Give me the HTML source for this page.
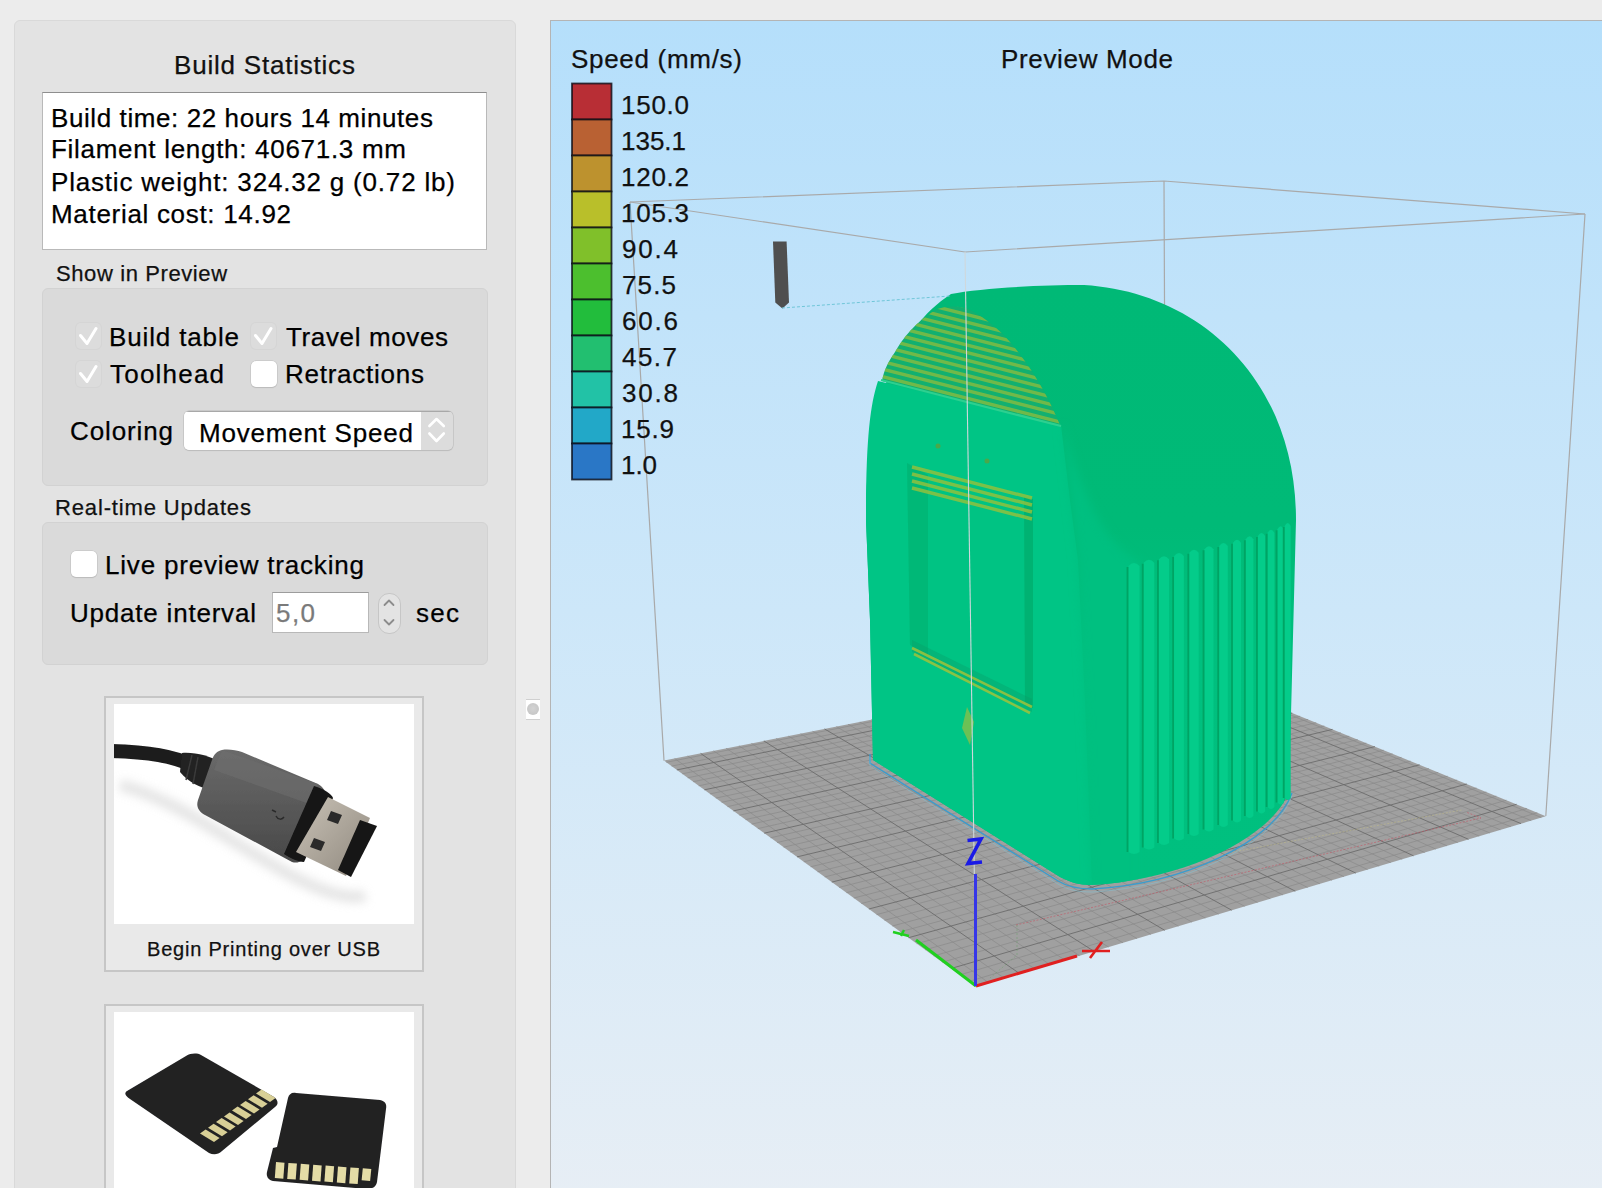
<!DOCTYPE html>
<html><head><meta charset="utf-8"><style>
html,body{margin:0;padding:0}
body{width:1602px;height:1188px;position:relative;overflow:hidden;background:#ececec;font-family:"Liberation Sans", sans-serif}
.abs{position:absolute}
.cbd{width:25px;height:26px;border-radius:5px;background:#dcdcdc;box-shadow:0 0 0 1px #d5d5d5}
.cbu{width:26px;height:26px;border-radius:5px;background:#fff;box-shadow:0 0 0 0.5px #bdbdbd, 0 1px 1px rgba(0,0,0,0.15)}
.card{background:#e9e9e9;border:2px solid #c6c6c6}
.t{position:absolute;white-space:pre;font-family:"Liberation Sans", sans-serif;-webkit-text-stroke:0.25px currentColor}
</style></head><body>
<div class="abs" style="left:14px;top:20px;width:500px;height:1200px;background:#e3e3e3;border:1px solid #d9d9d9;border-radius:6px"></div>
<div class="abs" style="left:42px;top:92px;width:443px;height:156px;background:#fff;border:1px solid #b9b9b9;border-top-color:#8e8e8e"></div>
<div class="abs" style="left:42px;top:288px;width:444px;height:196px;background:#dadada;border:1px solid #d2d2d2;border-radius:6px"></div>
<div class="abs" style="left:42px;top:522px;width:444px;height:141px;background:#dadada;border:1px solid #d2d2d2;border-radius:6px"></div>

<!-- disabled checked checkboxes -->
<div class="abs cbd" style="left:75.5px;top:322.5px"></div>
<div class="abs cbd" style="left:250.5px;top:322.5px"></div>
<div class="abs cbd" style="left:75.5px;top:360.5px"></div>
<svg class="abs" style="left:0;top:0" width="520" height="700">
 <path d="M80.5 335.5 L87 343.5 L96 328.5 M255.5 335.5 L262 343.5 L271 328.5 M80.5 373.5 L87 381.5 L96 366.5" stroke="#fff" stroke-width="3" fill="none" stroke-linecap="round" stroke-linejoin="round"/>
</svg>
<div class="abs cbu" style="left:250.5px;top:360.5px"></div>
<div class="abs cbu" style="left:70.5px;top:550.5px"></div>
<!-- popup -->
<div class="abs" style="left:183.5px;top:410.5px;width:269px;height:39px;border-radius:5px;background:#dcdcdc;box-shadow:0 0 0 0.5px #b8b8b8, 0 1px 1px rgba(0,0,0,0.12);overflow:hidden">
  <div class="abs" style="left:0;top:0;width:237px;height:39px;background:#fff"></div>
  <div class="abs" style="left:0;top:0;width:269px;height:1px;background:#a8a8a8"></div>
</div>

<!-- text field -->
<div class="abs" style="left:271.5px;top:591.5px;width:95px;height:39px;background:#fff;border:1px solid #b8b8b8;border-top-color:#9c9c9c"></div>
<!-- stepper -->
<div class="abs" style="left:378px;top:593px;width:21px;height:39px;border-radius:11px;background:#e3e3e3;border:1px solid #c6c6c6"></div>
<svg class="abs" style="left:0;top:0" width="520" height="700">
 <path d="M429.4 426 L436.5 419 L443.8 426 M429.4 433.5 L436.5 441 L443.8 433.5" stroke="#fff" stroke-width="2.6" fill="none" stroke-linecap="round" stroke-linejoin="round"/>
 <path d="M384.5 605 L389 600.5 L393.5 605 M384.5 620 L389 624.5 L393.5 620" stroke="#8c8c8c" stroke-width="1.8" fill="none" stroke-linecap="round" stroke-linejoin="round"/>
</svg>
<!-- cards -->
<div class="abs card" style="left:104px;top:696px;width:316px;height:272px"></div>
<div class="abs card" style="left:104px;top:1004px;width:316px;height:260px"></div>
<div class="abs" style="left:114px;top:704px;width:300px;height:220px;background:#fff"></div>
<div class="abs" style="left:114px;top:1012px;width:300px;height:220px;background:#fff"></div>
<!-- splitter knob -->
<div class="abs" style="left:526px;top:698.5px;width:14px;height:19px;background:#fff;border-top:1px solid #d0d0d0;border-bottom:1px solid #d0d0d0"></div>
<div class="abs" style="left:527px;top:702.5px;width:12px;height:12px;border-radius:50%;background:radial-gradient(circle at 50% 45%, #d4d4d4, #c2c2c2)"></div>


<svg class="abs" style="left:0;top:0" width="520" height="1188">
<defs>
 <filter id="blur4" x="-50%" y="-50%" width="200%" height="200%"><feGaussianBlur stdDeviation="5"/></filter>
 <filter id="blur1" x="-20%" y="-20%" width="140%" height="140%"><feGaussianBlur stdDeviation="0.7"/></filter>
 <linearGradient id="metal" x1="0" y1="0" x2="1" y2="1">
  <stop offset="0" stop-color="#c9c2b6"/><stop offset="1" stop-color="#8f887e"/>
 </linearGradient>
 <linearGradient id="body" x1="0" y1="0" x2="0" y2="1">
  <stop offset="0" stop-color="#6a6a6a"/><stop offset="1" stop-color="#484848"/>
 </linearGradient>
 <clipPath id="usbclip"><rect x="114" y="704" width="300" height="220"/></clipPath>
 <clipPath id="sdclip"><rect x="114" y="1012" width="300" height="176"/></clipPath>
</defs>
<g clip-path="url(#usbclip)">
 <path d="M120 785 C180 800 240 850 300 880 C330 895 355 900 365 895" stroke="#d0d0d0" stroke-width="12" fill="none" filter="url(#blur4)" opacity="0.55"/>
 <g filter="url(#blur1)">
 <path d="M110 751 C150 752 172 756 195 766" stroke="#1c1c1c" stroke-width="14" fill="none"/>
 <path d="M182 753 C195 752 210 756 220 762 L212 790 C200 788 188 782 180 772 Z" fill="#222"/>
 <path d="M192 755 L186 780 M198 757 L193 784" stroke="#3a3a3a" stroke-width="1.5"/>
 <path d="M222 750 C228 749 236 750 242 752 L318 784 C324 787 326 792 324 798 L306 855 C304 861 298 864 292 862 L205 815 C198 811 196 806 198 800 L212 760 C214 754 217 751 222 750 Z" fill="url(#body)"/>
 <path d="M222 750 L318 784 L312 805 L214 770 Z" fill="#707070" opacity="0.5"/>
 <path d="M314 786 C322 788 332 794 333 798 L304 862 C298 862 290 858 284 854 Z" fill="#141414"/>
 <path d="M328 797 L370 818 L346 876 L296 852 Z" fill="url(#metal)"/>
 <path d="M331 811 L342 815 L338 824 L327 820 Z M314 838 L325 842 L321 851 L310 847 Z" fill="#2a2a2a"/>
 <path d="M360 820 L377 826 L351 877 L338 870 Z" fill="#151515"/>
 <path d="M272 810 l4 2 M276 816 c2 4 6 4 8 1" stroke="#2a2a2a" stroke-width="1.5" fill="none"/>
 </g>
</g>
<g clip-path="url(#sdclip)" filter="url(#blur1)">
 <path d="M127 1091 L186 1056 C191 1053 197 1053 201 1055 L274 1097 C278 1100 279 1104 275 1107 L222 1151 C218 1155 213 1155 209 1153 L130 1099 C125 1096 124 1093 127 1091 Z" fill="#222224"/>
 <path d="M214.0 1142.0 l-14 -8.5 l5.6 -4 l14 8.5 Z" fill="#d8cf96"/><path d="M222.0 1136.3 l-14 -8.5 l5.6 -4 l14 8.5 Z" fill="#d8cf96"/><path d="M230.0 1130.6 l-14 -8.5 l5.6 -4 l14 8.5 Z" fill="#d8cf96"/><path d="M238.0 1124.9 l-14 -8.5 l5.6 -4 l14 8.5 Z" fill="#d8cf96"/><path d="M246.0 1119.1 l-14 -8.5 l5.6 -4 l14 8.5 Z" fill="#d8cf96"/><path d="M254.0 1113.4 l-14 -8.5 l5.6 -4 l14 8.5 Z" fill="#d8cf96"/><path d="M262.0 1107.7 l-14 -8.5 l5.6 -4 l14 8.5 Z" fill="#d8cf96"/><path d="M270.0 1102.0 l-14 -8.5 l5.6 -4 l14 8.5 Z" fill="#d8cf96"/>
 <path d="M296 1093 L380 1100 C385 1101 387 1104 386 1109 L377 1182 C376 1187 372 1189 367 1189 L273 1181 C268 1180 266 1176 267 1172 L273 1148 L277 1147 L288 1098 C289 1094 292 1092 296 1093 Z" fill="#222224"/>
 <path d="M276.0 1162.0 l8.5 0.7 l-1.2 16 l-8.5 -0.7 Z" fill="#e4dca6"/><path d="M288.4 1162.9 l8.5 0.7 l-1.2 16 l-8.5 -0.7 Z" fill="#e4dca6"/><path d="M300.8 1163.8 l8.5 0.7 l-1.2 16 l-8.5 -0.7 Z" fill="#e4dca6"/><path d="M313.2 1164.7 l8.5 0.7 l-1.2 16 l-8.5 -0.7 Z" fill="#e4dca6"/><path d="M325.6 1165.6 l8.5 0.7 l-1.2 16 l-8.5 -0.7 Z" fill="#e4dca6"/><path d="M338.0 1166.5 l8.5 0.7 l-1.2 16 l-8.5 -0.7 Z" fill="#e4dca6"/><path d="M350.4 1167.4 l8.5 0.7 l-1.2 16 l-8.5 -0.7 Z" fill="#e4dca6"/><path d="M362.8 1168.3 l8.5 0.7 l-1.2 12 l-8.5 -0.7 Z" fill="#e4dca6"/>
</g>
</svg>


<svg class="abs" style="left:0;top:0" width="1602" height="1188" viewBox="0 0 1602 1188">
<defs>
 <linearGradient id="bg" x1="0" y1="0" x2="0" y2="1">
  <stop offset="0" stop-color="#b5dffb"/>
  <stop offset="0.5" stop-color="#cde7f9"/>
  <stop offset="1" stop-color="#e7eef5"/>
 </linearGradient>
 <clipPath id="vp"><rect x="551" y="21" width="1051" height="1167"/></clipPath>
</defs>
<rect x="550.5" y="20.5" width="1060" height="1180" fill="url(#bg)" stroke="#b4b4b4" stroke-width="1"/>
<g clip-path="url(#vp)">
 <!-- bbox back lines -->
 <path d="M630 202 L1164 181 L1585 214 M1164 181 L1166 661" stroke="#a9a9a9" stroke-width="1.2" fill="none"/>
 <path d="M976.2 986.7L1545.8 816.2L1166 661.6L664 760.6Z" fill="#a0a0a0"/>
 <path d="M988.9 982.9L674.6 758.5 M968.9 981.4L1537.3 812.7 M1004.4 978.3L687.7 755.9 M959.9 974.9L1526.9 808.5 M1035.0 969.1L713.5 750.8 M942.3 962.2L1506.4 800.2 M1050.0 964.6L726.2 748.3 M933.7 955.9L1496.3 796.1 M1064.9 960.1L738.9 745.8 M925.2 949.8L1486.4 792.0 M1079.6 955.7L751.4 743.4 M916.8 943.7L1476.5 788.0 M1108.6 947.1L776.2 738.5 M900.4 931.8L1457.1 780.1 M1122.9 942.8L788.4 736.1 M892.4 926.0L1447.6 776.2 M1137.0 938.6L800.6 733.7 M884.5 920.3L1438.2 772.4 M1150.9 934.4L812.6 731.3 M876.6 914.6L1428.9 768.6 M1178.4 926.2L836.4 726.6 M861.3 903.5L1410.5 761.1 M1191.9 922.1L848.1 724.3 M853.8 898.0L1401.5 757.4 M1205.3 918.1L859.8 722.0 M846.4 892.7L1392.5 753.8 M1218.6 914.2L871.4 719.7 M839.0 887.4L1383.7 750.2 M1244.6 906.3L894.2 715.2 M824.7 876.9L1366.3 743.1 M1257.5 902.5L905.5 713.0 M817.6 871.8L1357.7 739.6 M1270.2 898.7L916.7 710.8 M810.6 866.8L1349.2 736.2 M1282.8 894.9L927.8 708.6 M803.8 861.8L1340.8 732.8 M1307.6 887.5L949.8 704.2 M790.3 852.0L1324.3 726.0 M1319.8 883.8L960.7 702.1 M783.6 847.2L1316.2 722.7 M1332.0 880.2L971.5 700.0 M777.1 842.5L1308.1 719.4 M1343.9 876.6L982.2 697.8 M770.6 837.8L1300.1 716.2 M1367.6 869.6L1003.4 693.7 M757.9 828.6L1284.4 709.8 M1379.2 866.1L1013.8 691.6 M751.7 824.1L1276.6 706.6 M1390.7 862.6L1024.2 689.6 M745.5 819.6L1269.0 703.5 M1402.2 859.2L1034.5 687.5 M739.4 815.2L1261.4 700.4 M1424.7 852.5L1054.9 683.5 M727.5 806.6L1246.4 694.3 M1435.8 849.1L1065.0 681.5 M721.6 802.3L1239.0 691.3 M1446.8 845.8L1075.0 679.5 M715.8 798.1L1231.7 688.4 M1457.7 842.6L1084.9 677.6 M710.0 793.9L1224.5 685.4 M1479.2 836.1L1104.6 673.7 M698.7 785.8L1210.2 679.6 M1489.8 833.0L1114.3 671.8 M693.2 781.7L1203.2 676.7 M1500.3 829.8L1123.9 669.9 M687.7 777.8L1196.2 673.9 M1510.7 826.7L1133.5 668.0 M682.3 773.8L1189.3 671.1 M1531.2 820.6L1152.5 664.3 M671.6 766.1L1175.7 665.5 M1541.3 817.5L1161.9 662.4 M666.3 762.3L1169.0 662.8" stroke="#8a8a8a" stroke-width="0.7" fill="none"/>
 <path d="M1019.8 973.7L700.6 753.4 M951.0 968.5L1516.6 804.3 M1094.2 951.4L763.9 740.9 M908.6 937.7L1466.8 784.0 M1164.7 930.3L824.5 728.9 M868.9 909.0L1419.6 764.8 M1231.7 910.2L882.8 717.4 M831.8 882.1L1374.9 746.6 M1295.3 891.2L938.9 706.4 M797.0 856.9L1332.5 729.4 M1355.8 873.1L992.8 695.8 M764.2 833.2L1292.2 713.0 M1413.5 855.8L1044.7 685.5 M733.4 810.9L1253.9 697.4 M1468.5 839.3L1094.8 675.6 M704.4 789.8L1217.3 682.5 M1521.0 823.6L1143.0 666.1 M676.9 769.9L1182.5 668.3" stroke="#6c6c6c" stroke-width="0.9" fill="none"/>
 <path d="M1016 925 L1481 818 L1466 812" stroke="#c84a5a" stroke-width="0.8" stroke-dasharray="2 1.5" fill="none" opacity="0.65"/>
 <path d="M1222 854 L1462 810" stroke="#c8c080" stroke-width="0.8" stroke-dasharray="2 1.5" fill="none" opacity="0.55"/>
 <path d="M1017 925 L1017 955 L990 978" stroke="#60a060" stroke-width="0.7" stroke-dasharray="2 2" fill="none" opacity="0.6"/>
 <path d="M630 202 L664 760.6 M1585 214 L1545.8 816" stroke="#a9a9a9" stroke-width="1.2" fill="none"/>
 <!-- object -->
 
 <path d="M870 754 L870 763 L1058 881 C1068 887 1078 889 1092 889 C1182 884 1274 843 1292 793" stroke="#3d9ccb" stroke-width="1.4" fill="none"/>
 <path d="M870 754 L870 763 L1058 881 C1068 887 1078 889 1092 889 C1182 884 1274 843 1292 793" stroke="#7fc6dc" stroke-width="0.8" fill="none" transform="translate(0,3)" opacity="0.6"/>
 <linearGradient id="sideg" x1="0" y1="0" x2="0" y2="1">
   <stop offset="0" stop-color="#00b976"/><stop offset="0.4" stop-color="#00ba77"/><stop offset="0.6" stop-color="#00bf7e"/><stop offset="1" stop-color="#00c07f"/>
 </linearGradient>
 <path d="M873 760 L870 620 L866 520 C866 410 895 330 951 294 C980 288 1040 285 1084 285 C1200 292 1296 380 1296 520 L1289 792 C1270 840 1180 880 1092 885 C1078 885 1070 882 1060 877 L873 760 Z" fill="url(#sideg)"/>
 <path d="M873 760 L870 620 L866 520 C866 440 870 405 878 381 L1061 425 L1070 500 L1078 560 L1085 700 L1092 885 C1078 885 1070 882 1060 877 L873 760 Z" fill="#00c585"/>
 <filter id="soft" x="-30%" y="-30%" width="160%" height="160%"><feGaussianBlur stdDeviation="5"/></filter>
 <clipPath id="silc"><path d="M873 760 L870 620 L866 520 C866 410 895 330 951 294 C980 288 1040 285 1084 285 C1200 292 1296 380 1296 520 L1289 792 C1270 840 1180 880 1092 885 C1078 885 1070 882 1060 877 L873 760 Z"/></clipPath>
 <g clip-path="url(#silc)"><path d="M1062 424 L1078 560 L1085 700 L1092 900 L1140 900 L1140 563 C1110 545 1090 520 1062 424 Z" fill="#00c080" filter="url(#soft)"/></g>
 <clipPath id="hc"><path d="M882 381 C884 370 888 362 895 352 C903 338 915 322 937 309 C950 305 962 306 972 311 C985 318 1000 330 1010 342 C1030 365 1048 395 1060 425 Z"/></clipPath>
 <path d="M882 381 C884 370 888 362 895 352 C903 338 915 322 937 309 C950 305 962 306 972 311 C985 318 1000 330 1010 342 C1030 365 1048 395 1060 425 Z" fill="#12b070"/>
 <g clip-path="url(#hc)"><path d="M860 386.2 L1080 442.2 M860 378.6 L1080 434.6 M860 371.0 L1080 427.0 M860 363.4 L1080 419.4 M860 355.8 L1080 411.8 M860 348.2 L1080 404.2 M860 340.6 L1080 396.6 M860 333.0 L1080 389.0 M860 325.4 L1080 381.4 M860 317.8 L1080 373.8 M860 310.2 L1080 366.2 M860 302.6 L1080 358.6 M860 295.0 L1080 351.0 M860 287.4 L1080 343.4 M860 279.8 L1080 335.8 M860 272.2 L1080 328.2 M860 264.6 L1080 320.6 M860 257.0 L1080 313.0" stroke="#90bc3c" stroke-width="3.4" opacity="0.75" fill="none"/></g>
 <path d="M881 380 L1061 426" stroke="#2cd090" stroke-width="2.2" fill="none"/>
 <!-- window -->
 <path d="M907 463 L1033 499 L1033 708 L910 645 Z" fill="#00c383"/>
 <path d="M907 463 L910 645 L928 655 L928 475 Z" fill="#00b676" opacity="0.85"/>
 <path d="M1024 497 L1033 499 L1033 708 L1025 704 Z" fill="#00b272"/>
 <path d="M912 467.0 L1032 498.0 M912 474.0 L1032 505.0 M912 481.0 L1032 512.0 M912 488.0 L1032 519.0" stroke="#98c03a" stroke-width="3.4" fill="none" opacity="0.8"/>
 <path d="M912 640 L1032 699 L1032 712 L912 652 Z" fill="#0a9a66" opacity="0.35"/>
 <path d="M912 648 L1032 707 M914 654 L1030 713" stroke="#a0c23a" stroke-width="2.6" fill="none" opacity="0.85"/>
 <circle cx="938" cy="446" r="2.5" fill="#4aa84a"/>
 <circle cx="987" cy="461" r="2.5" fill="#4aa84a"/>
 <path d="M967 707 L974 722 L970 745 L962 728 Z" fill="#7ec04c" opacity="0.85"/>
 <path d="M1128.5 566.0 Q1134.0 560.0 1139.5 566.0 L1139.5 852.0 Q1134.0 856.0 1128.5 852.0 Z" fill="#04cc8a"/><path d="M1127.5 567.0 L1127.5 852.0" stroke="#00a464" stroke-width="1.8" fill="none"/><path d="M1143.7 562.7 Q1149.0 556.7 1154.3 562.7 L1154.3 847.5 Q1149.0 851.5 1143.7 847.5 Z" fill="#04cc8a"/><path d="M1142.7 563.7 L1142.7 847.5" stroke="#00a464" stroke-width="1.8" fill="none"/><path d="M1158.9 559.3 Q1164.0 553.3 1169.1 559.3 L1169.1 843.0 Q1164.0 847.0 1158.9 843.0 Z" fill="#04cc8a"/><path d="M1157.9 560.3 L1157.9 843.0" stroke="#00a464" stroke-width="1.8" fill="none"/><path d="M1174.1 556.0 Q1179.0 550.0 1183.9 556.0 L1183.9 838.5 Q1179.0 842.5 1174.1 838.5 Z" fill="#04cc8a"/><path d="M1173.1 557.0 L1173.1 838.5" stroke="#00a464" stroke-width="1.8" fill="none"/><path d="M1189.3 552.7 Q1194.0 546.7 1198.7 552.7 L1198.7 834.0 Q1194.0 838.0 1189.3 834.0 Z" fill="#04cc8a"/><path d="M1188.3 553.7 L1188.3 834.0" stroke="#00a464" stroke-width="1.8" fill="none"/><path d="M1204.5 549.3 Q1209.0 543.3 1213.5 549.3 L1213.5 829.5 Q1209.0 833.5 1204.5 829.5 Z" fill="#04cc8a"/><path d="M1203.5 550.3 L1203.5 829.5" stroke="#00a464" stroke-width="1.8" fill="none"/><path d="M1219.2 546.0 Q1223.5 540.0 1227.8 546.0 L1227.8 825.0 Q1223.5 829.0 1219.2 825.0 Z" fill="#04cc8a"/><path d="M1218.2 547.0 L1218.2 825.0" stroke="#00a464" stroke-width="1.8" fill="none"/><path d="M1233.0 542.7 Q1237.0 536.7 1241.0 542.7 L1241.0 820.5 Q1237.0 824.5 1233.0 820.5 Z" fill="#04cc8a"/><path d="M1232.0 543.7 L1232.0 820.5" stroke="#00a464" stroke-width="1.8" fill="none"/><path d="M1245.8 539.3 Q1249.6 533.3 1253.4 539.3 L1253.4 816.0 Q1249.6 820.0 1245.8 816.0 Z" fill="#04cc8a"/><path d="M1244.8 540.3 L1244.8 816.0" stroke="#00a464" stroke-width="1.8" fill="none"/><path d="M1257.9 536.0 Q1261.5 530.0 1265.1 536.0 L1265.1 811.5 Q1261.5 815.5 1257.9 811.5 Z" fill="#04cc8a"/><path d="M1256.9 537.0 L1256.9 811.5" stroke="#00a464" stroke-width="1.8" fill="none"/><path d="M1267.6 532.7 Q1271.0 526.7 1274.4 532.7 L1274.4 807.0 Q1271.0 811.0 1267.6 807.0 Z" fill="#04cc8a"/><path d="M1266.6 533.7 L1266.6 807.0" stroke="#00a464" stroke-width="1.8" fill="none"/><path d="M1277.5 529.3 Q1280.7 523.3 1283.9 529.3 L1283.9 802.5 Q1280.7 806.5 1277.5 802.5 Z" fill="#04cc8a"/><path d="M1276.5 530.3 L1276.5 802.5" stroke="#00a464" stroke-width="1.8" fill="none"/><path d="M1284.7 526.0 Q1287.7 520.0 1290.7 526.0 L1290.7 798.0 Q1287.7 802.0 1284.7 798.0 Z" fill="#04cc8a"/><path d="M1283.7 527.0 L1283.7 798.0" stroke="#00a464" stroke-width="1.8" fill="none"/>

 <!-- front -->
 <path d="M630 202 L965 252 L1585 214" stroke="#a9a9a9" stroke-width="1.2" fill="none"/>
 <path d="M965 252 L976 986" stroke="#cfd8dc" stroke-width="1.1" fill="none"/>
 <!-- toolhead -->
 <path d="M773 241.5 L786.6 241.5 L789 302.5 L782.4 308.4 L775.3 302.5 Z" fill="#4f4f4f"/>
 <path d="M782 308 L950 296" stroke="#6fc6d8" stroke-width="1" stroke-dasharray="3 2" fill="none"/>
 <!-- legend -->
 <rect x="572" y="83.5" width="39.5" height="36" fill="#b82e35" stroke="#0a0a14" stroke-opacity="0.8" stroke-width="1.8"/><rect x="572" y="119.5" width="39.5" height="36" fill="#b96133" stroke="#0a0a14" stroke-opacity="0.8" stroke-width="1.8"/><rect x="572" y="155.5" width="39.5" height="36" fill="#bd922e" stroke="#0a0a14" stroke-opacity="0.8" stroke-width="1.8"/><rect x="572" y="191.5" width="39.5" height="36" fill="#b9bf2a" stroke="#0a0a14" stroke-opacity="0.8" stroke-width="1.8"/><rect x="572" y="227.5" width="39.5" height="36" fill="#80c02a" stroke="#0a0a14" stroke-opacity="0.8" stroke-width="1.8"/><rect x="572" y="263.5" width="39.5" height="36" fill="#4cbf2e" stroke="#0a0a14" stroke-opacity="0.8" stroke-width="1.8"/><rect x="572" y="299.5" width="39.5" height="36" fill="#22bd3c" stroke="#0a0a14" stroke-opacity="0.8" stroke-width="1.8"/><rect x="572" y="335.5" width="39.5" height="36" fill="#22bf70" stroke="#0a0a14" stroke-opacity="0.8" stroke-width="1.8"/><rect x="572" y="371.5" width="39.5" height="36" fill="#22c2a6" stroke="#0a0a14" stroke-opacity="0.8" stroke-width="1.8"/><rect x="572" y="407.5" width="39.5" height="36" fill="#22a8c8" stroke="#0a0a14" stroke-opacity="0.8" stroke-width="1.8"/><rect x="572" y="443.5" width="39.5" height="36" fill="#2a77c6" stroke="#0a0a14" stroke-opacity="0.8" stroke-width="1.8"/>
 <!-- axes -->
 <path d="M976 986 L1077 956" stroke="#e02020" stroke-width="3" fill="none"/>
 <path d="M976 986 L916 940" stroke="#20d020" stroke-width="3" fill="none"/>
 <path d="M975.5 986 L975.5 874" stroke="#3636e8" stroke-width="3" fill="none"/>
 <path d="M967.5 840.5 L981 839 L968 863.5 L982 862" stroke="#1a1ae6" stroke-width="3.6" fill="none" stroke-linejoin="miter"/>
 <path d="M1082 951 L1110 951 M1090 958 L1102 942" stroke="#e02020" stroke-width="2.6" fill="none"/>
 <path d="M893 932 L909 936 M904 930 L901 936" stroke="#20d020" stroke-width="2.4" fill="none"/>
</g>
</svg>
<div class="t" style="left:174.0px;top:51.5px;font-size:26px;line-height:26px;letter-spacing:0.79px;color:#111">Build Statistics</div>
<div class="t" style="left:51.0px;top:104.5px;font-size:26px;line-height:26px;letter-spacing:0.59px;color:#000">Build time: 22 hours 14 minutes</div>
<div class="t" style="left:51.0px;top:136.3px;font-size:26px;line-height:26px;letter-spacing:0.70px;color:#000">Filament length: 40671.3 mm</div>
<div class="t" style="left:51.0px;top:168.5px;font-size:26px;line-height:26px;letter-spacing:0.81px;color:#000">Plastic weight: 324.32 g (0.72 lb)</div>
<div class="t" style="left:51.0px;top:200.5px;font-size:26px;line-height:26px;letter-spacing:0.69px;color:#000">Material cost: 14.92</div>
<div class="t" style="left:56.0px;top:263.4px;font-size:22px;line-height:22px;letter-spacing:0.60px;color:#111">Show in Preview</div>
<div class="t" style="left:109.0px;top:323.6px;font-size:26px;line-height:26px;letter-spacing:0.86px;color:#000">Build table</div>
<div class="t" style="left:286.0px;top:323.6px;font-size:26px;line-height:26px;letter-spacing:0.63px;color:#000">Travel moves</div>
<div class="t" style="left:110.0px;top:360.9px;font-size:26px;line-height:26px;letter-spacing:1.21px;color:#000">Toolhead</div>
<div class="t" style="left:285.0px;top:360.9px;font-size:26px;line-height:26px;letter-spacing:0.75px;color:#000">Retractions</div>
<div class="t" style="left:70.0px;top:418.0px;font-size:26px;line-height:26px;letter-spacing:0.88px;color:#000">Coloring</div>
<div class="t" style="left:199.0px;top:419.6px;font-size:26px;line-height:26px;letter-spacing:0.78px;color:#000">Movement Speed</div>
<div class="t" style="left:55.0px;top:497.4px;font-size:22px;line-height:22px;letter-spacing:0.86px;color:#111">Real-time Updates</div>
<div class="t" style="left:105.0px;top:552.3px;font-size:26px;line-height:26px;letter-spacing:0.81px;color:#000">Live preview tracking</div>
<div class="t" style="left:70.0px;top:599.6px;font-size:26px;line-height:26px;letter-spacing:0.79px;color:#000">Update interval</div>
<div class="t" style="left:276.0px;top:599.6px;font-size:26px;line-height:26px;letter-spacing:1.42px;color:#7a7a7a">5,0</div>
<div class="t" style="left:416.0px;top:599.6px;font-size:26px;line-height:26px;letter-spacing:1.27px;color:#000">sec</div>
<div class="t" style="left:147.0px;top:939.1px;font-size:20px;line-height:20px;letter-spacing:0.79px;color:#111">Begin Printing over USB</div>
<div class="t" style="left:571.0px;top:45.8px;font-size:26px;line-height:26px;letter-spacing:0.70px;color:#111">Speed (mm/s)</div>
<div class="t" style="left:1001.0px;top:45.8px;font-size:26px;line-height:26px;letter-spacing:0.66px;color:#111">Preview Mode</div>
<div class="t" style="left:621.0px;top:91.7px;font-size:26px;line-height:26px;letter-spacing:0.73px;color:#111">150.0</div>
<div class="t" style="left:621.0px;top:127.7px;font-size:26px;line-height:26px;letter-spacing:-0.02px;color:#111">135.1</div>
<div class="t" style="left:621.0px;top:163.7px;font-size:26px;line-height:26px;letter-spacing:0.73px;color:#111">120.2</div>
<div class="t" style="left:621.0px;top:199.7px;font-size:26px;line-height:26px;letter-spacing:0.73px;color:#111">105.3</div>
<div class="t" style="left:622.0px;top:235.7px;font-size:26px;line-height:26px;letter-spacing:1.80px;color:#111">90.4</div>
<div class="t" style="left:622.0px;top:271.7px;font-size:26px;line-height:26px;letter-spacing:1.13px;color:#111">75.5</div>
<div class="t" style="left:622.0px;top:307.7px;font-size:26px;line-height:26px;letter-spacing:1.80px;color:#111">60.6</div>
<div class="t" style="left:622.0px;top:343.7px;font-size:26px;line-height:26px;letter-spacing:1.46px;color:#111">45.7</div>
<div class="t" style="left:622.0px;top:379.7px;font-size:26px;line-height:26px;letter-spacing:1.80px;color:#111">30.8</div>
<div class="t" style="left:621.0px;top:415.7px;font-size:26px;line-height:26px;letter-spacing:0.80px;color:#111">15.9</div>
<div class="t" style="left:621.0px;top:451.7px;font-size:26px;line-height:26px;letter-spacing:-0.08px;color:#111">1.0</div>
</body></html>
